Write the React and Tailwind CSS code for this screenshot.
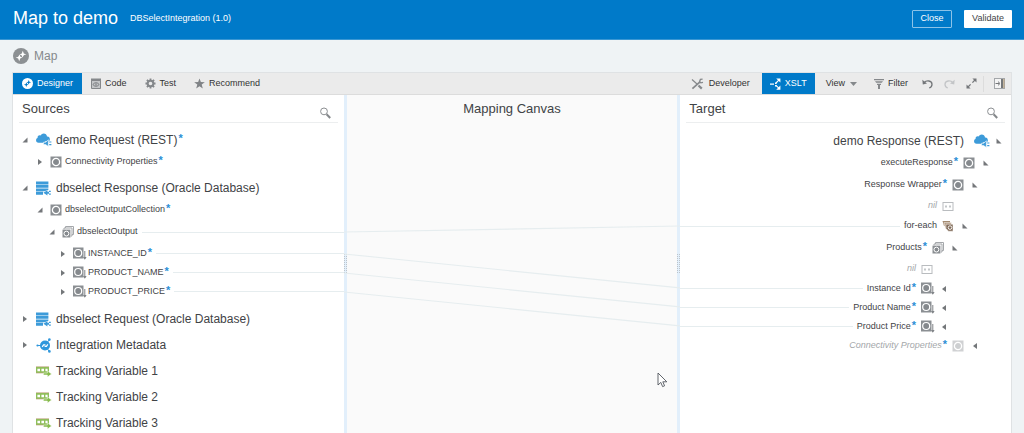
// src/App.jsx
import React, { useState } from 'react';

/* ---------- icons ---------- */

function MapGlyph({ size, disc, mark }) {
  return (
    <svg width={size} height={size} viewBox="0 0 16 16" className="shrink-0">
      <circle cx="8" cy="8" r="8" fill={disc} />
      <path d="M2.6 9.6L5 9L6.6 6.4L7.4 8.8L9.4 9.4L7.2 10.4L6.2 13.2L5.2 10.6Z" fill={mark} />
      <path d="M13.4 6.4L11 7L9.4 9.6L8.6 7.2L6.6 6.6L8.8 5.6L9.8 2.8L10.8 5.4Z" fill={mark} />
    </svg>
  );
}

function CodeIcon() {
  return (
    <svg width="10" height="11" viewBox="0 0 10 11" className="shrink-0">
      <path d="M0.5 2.5V10.5H9.5V2.5Z" fill="#c4c6c8" stroke="#85888b" />
      <path d="M0 0.5H10V2.8H0Z" fill="#85888b" />
      <path d="M3.8 4.5L2.2 6.5L3.8 8.5M6.2 4.5L7.8 6.5L6.2 8.5M5 4V9" fill="none" stroke="#74777a" />
    </svg>
  );
}

function GearIcon() {
  return (
    <svg width="11" height="11" viewBox="0 0 12 12" className="shrink-0">
      <path d="M6 0.5V11.5M0.5 6H11.5M2.1 2.1L9.9 9.9M9.9 2.1L2.1 9.9" stroke="#85888b" strokeWidth="2" />
      <circle cx="6" cy="6" r="3.1" fill="#ebebeb" stroke="#85888b" strokeWidth="2.2" />
    </svg>
  );
}

function StarIcon() {
  return (
    <svg width="11" height="11" viewBox="0 0 12 12" className="shrink-0">
      <path d="M6 0.5L7.5 4.4L11.8 4.6L8.4 7.2L9.6 11.4L6 9L2.4 11.4L3.6 7.2L0.2 4.6L4.5 4.4Z" fill="#808386" />
    </svg>
  );
}

function ToolsIcon() {
  return (
    <svg width="13" height="12" viewBox="0 0 13 12" className="shrink-0" fill="none" stroke="#85888b">
      <path d="M1 1.5L6 6" strokeWidth="1.2" />
      <path d="M7.5 7.5L10.8 10.6" strokeWidth="2.2" />
      <path d="M1.4 10.6L9 3.8" strokeWidth="1.8" />
      <path d="M11.6 1.2L9.4 1.4L8.6 3.4L9.8 4.8L12 4.4" strokeWidth="1.3" />
    </svg>
  );
}

function XsltIcon() {
  return (
    <svg width="11" height="12" viewBox="0 0 11 12" className="shrink-0">
      <path d="M0 5.4H4V6.8H0ZM5 4.4H6.6V6H5ZM5 7H6.6V8.4H5Z" fill="#fff" />
      <path d="M6.2 0.4H10.4V4.6ZM6.2 11.8H10.4V7.6Z" fill="#fff" />
      <path d="M6 5L8.8 2.2M6 7.4L8.8 10.2" stroke="#fff" strokeWidth="1.1" />
    </svg>
  );
}

function FilterIcon() {
  return (
    <svg width="10" height="10" viewBox="0 0 10 10" className="shrink-0" fill="#85888b">
      <path d="M0 0H10V1.3H0ZM1 2.3H9L7.8 3.7H2.2ZM3 4.7H7V6H3ZM4 6H6V10H4Z" />
    </svg>
  );
}

function UndoIcon({ color, flip }) {
  return (
    <svg width="11" height="10" viewBox="0 0 11 10" className="shrink-0">
      <g transform={flip ? 'translate(11 0) scale(-1 1)' : undefined}>
        <path d="M0.3 0.8L0.8 5.4L5 4.6Z" fill={color} />
        <path d="M2 3.6C4.5 1 9.8 1.4 10 5.2C10 7 9 8.4 7.2 9" fill="none" stroke={color} strokeWidth="1.3" />
      </g>
    </svg>
  );
}

function ExpandIcon() {
  return (
    <svg width="11" height="11" viewBox="0 0 11 11" className="shrink-0" fill="#74777a" stroke="#74777a">
      <path d="M6.4 0.5H10.5V4.6ZM0.5 6.4V10.5H4.6Z" stroke="none" />
      <path d="M6.4 4.6L9 2M4.6 6.4L2 9" strokeWidth="1.3" />
    </svg>
  );
}

function PanelIcon() {
  return (
    <svg width="11" height="11" viewBox="0 0 11 11" className="shrink-0">
      <rect x="0.5" y="0.5" width="10" height="10" fill="#f4f4f4" stroke="#a4a7aa" />
      <path d="M7 1H9.4V10H7Z" fill="#74777a" />
      <path d="M1.5 5.5H5M4 3.6L6 5.5L4 7.4" fill="none" stroke="#74777a" />
      <path d="M9.9 1V10" stroke="#c9a36b" strokeWidth="0.7" />
    </svg>
  );
}

function SearchIcon() {
  return (
    <svg width="11" height="12" viewBox="0 0 11 12" fill="none">
      <circle cx="4" cy="4.4" r="3.4" stroke="#8c8f92" strokeWidth="1" />
      <path d="M6.6 7.2L10.2 11" stroke="#85888b" strokeWidth="2" />
    </svg>
  );
}

function CloudIcon() {
  return (
    <svg width="16" height="14" viewBox="0 0 16 14" className="shrink-0" fill="#3d9bd9">
      <path d="M2.6 9.8C-0.6 9.8 -0.6 5.6 1.6 5C1.2 2.8 3.4 1.8 4.6 2.6C6 -0.6 10.8 0 11 3.6C14 3.2 14.8 7.4 12.6 8.6L10 8L7.4 9.8Z" />
      <path d="M12.4 6.8V13.4L9.6 11.6H7.6V9.2H9.6Z" stroke="#fff" strokeWidth="0.6" />
      <path d="M13.2 8.4H15.4V9.6H13.2ZM13.2 11H15.4V12.2H13.2Z" />
    </svg>
  );
}

function DatabaseIcon() {
  return (
    <svg width="16" height="15" viewBox="0 0 16 15" className="shrink-0" fill="#3d9bd9">
      <path d="M0 0.4H12.4V3.4H0ZM0 4H12.4V6.8H0ZM0 7.4H12.4V8.8L8.6 10.2H0ZM0 10.8H7V13.8H0Z" />
      <path d="M7.4 11.8L11.4 9.2V14.6ZM11.4 10.8H13V12.8H11.4ZM13 9.8H14.8V11H13ZM13 12.6H14.8V13.8H13Z" />
    </svg>
  );
}

function MetadataIcon() {
  return (
    <svg width="16" height="15" viewBox="0 0 16 15" className="shrink-0" fill="#2f97dc">
      <path d="M9 7.5L13.4 1.6M9 7.5L13.4 13.6M9 7.5H1" stroke="#2f97dc" strokeWidth="1" />
      <circle cx="9" cy="7.5" r="5" />
      <circle cx="13.4" cy="1.6" r="1.3" />
      <circle cx="13.4" cy="13.4" r="1.3" />
      <circle cx="1.5" cy="7.5" r="1.1" />
      <path d="M6.2 8.8L7.6 6.8H9.4M11.8 6.4L10.4 8.4H8.6" fill="none" stroke="#fff" strokeWidth="1.2" />
    </svg>
  );
}

function TrackingIcon() {
  return (
    <svg width="16" height="12" viewBox="0 0 16 12" className="shrink-0">
      <path d="M0 2H13V8H0Z" fill="#8fbf5a" />
      <path d="M0 1.6H13M0 8H8" stroke="#b79b72" strokeWidth="0.6" />
      <path d="M1.4 3.8H4V6.2H1.4ZM5.4 3.8H8V6.2H5.4ZM9.4 3.8H11.6V6.2H9.4Z" fill="#fff" />
      <path d="M7.4 8H11.4V5.8L15.6 9L11.4 12V10H7.4Z" fill="#86bb4b" stroke="#fff" strokeWidth="0.5" />
    </svg>
  );
}

function ElementIcon({ faded }) {
  return (
    <svg width="12" height="12" viewBox="0 0 12 12" className={faded ? 'shrink-0 opacity-40' : 'shrink-0'}>
      <path d="M0.5 0.5H11.5V11.5H0.5Z" fill="#8b8f93" />
      <circle cx="6" cy="6" r="3.6" fill="#85898d" stroke="#fff" strokeWidth="1.3" />
    </svg>
  );
}

function LeafIcon() {
  return (
    <svg width="15" height="13" viewBox="0 0 15 13" className="shrink-0">
      <path d="M1 0.5H11.5V11.5H1Z" fill="#8b8f93" />
      <circle cx="6.2" cy="6" r="3.5" fill="#85898d" stroke="#fff" strokeWidth="1.2" />
      <path d="M12.8 4V12" stroke="#808488" strokeWidth="1" />
      <path d="M11 10H14.6L12.8 12.8Z" fill="#808488" />
    </svg>
  );
}

function RepeatIcon() {
  return (
    <svg width="12" height="12" viewBox="0 0 12 12" className="shrink-0">
      <path d="M3.5 2V0.5H11.5V8.5H9.8" fill="none" stroke="#a4a7aa" />
      <path d="M2 3.4V2H10V10H8.8" fill="none" stroke="#a4a7aa" />
      <path d="M0.5 3.6H8.4V11.5H0.5Z" fill="#8b8f93" />
      <circle cx="4.4" cy="7.6" r="2.4" fill="#85898d" stroke="#fff" strokeWidth="1" />
    </svg>
  );
}

function ForEachIcon() {
  return (
    <svg width="12" height="12" viewBox="0 0 12 12" className="shrink-0">
      <path d="M0.5 1H8V6H2Z" fill="#a38a70" />
      <path d="M2 2.6H9.4V8.4H3.4Z" fill="#b39a80" stroke="#fff" strokeWidth="0.5" />
      <path d="M4 4.2H11V11.2H6.4L4 8.4Z" fill="#806a57" stroke="#fff" strokeWidth="0.5" />
      <circle cx="8" cy="7.6" r="1.8" fill="none" stroke="#fff" strokeWidth="0.9" />
    </svg>
  );
}

function NilIcon() {
  return (
    <svg width="12" height="11" viewBox="0 0 12 11" className="shrink-0" fill="none" stroke="#b9bcbf">
      <rect x="1" y="1.5" width="10" height="8" />
      <path d="M3 4.6H5V6.4H3ZM7 4.6H9V6.4H7Z" fill="#c4c7ca" stroke="none" />
    </svg>
  );
}

function Pointer() {
  return (
    <svg width="11" height="16" viewBox="0 0 11 16">
      <path d="M1 1V13L3.8 10.4L5.6 14.6L7.6 13.8L5.8 9.8H9.8Z" fill="#fff" stroke="#50555c" strokeWidth="0.9" />
    </svg>
  );
}

// direction of the little disclosure triangle
const arrowPaths = {
  open: 'M5.5 0.5V5.5H0.5Z',
  closed: 'M1 0L5 3L1 6Z',
  openRight: 'M0.5 0.5V5.5H5.5Z',
  closedRight: 'M5 0L1 3L5 6Z',
};

function Arrow({ type }) {
  return (
    <span className="flex w-3 shrink-0 justify-center">
      {type && (
        <svg width="6" height="6" viewBox="0 0 6 6">
          <path d={arrowPaths[type]} fill="#74777a" />
        </svg>
      )}
    </span>
  );
}

const icons = {
  cloud: <CloudIcon />,
  database: <DatabaseIcon />,
  metadata: <MetadataIcon />,
  tracking: <TrackingIcon />,
  element: <ElementIcon />,
  faded: <ElementIcon faded />,
  leaf: <LeafIcon />,
  repeat: <RepeatIcon />,
  foreach: <ForEachIcon />,
  nil: <NilIcon />,
};

/* ---------- tree rows ---------- */

const Required = () => <span className="mb-1 ml-px text-[11px] leading-3 font-bold text-[#2c8fd6]">*</span>;

const sourceIndent = ['pl-[6px]', 'pl-[21px]', 'pl-[33px]', 'pl-[44px]'];
const targetIndent = ['pr-[6px]', 'pr-[19px]', 'pr-[30px]', 'pr-[40px]', 'pr-[50px]', 'pr-[61px]'];

function SourceRow({ label, icon, arrow, level = 0, required, mapped, leaf }) {
  const top = level === 0;
  return (
    <li className={`flex items-center ${leaf ? 'h-[19px]' : 'h-[22px]'} ${sourceIndent[level]}`}>
      <Arrow type={arrow} />
      <span className={`flex shrink-0 justify-center ${top ? 'mr-[2px] ml-[3px] w-5' : 'ml-[2px] mr-px w-4'}`}>{icons[icon]}</span>
      <span className={`whitespace-nowrap ${top ? 'text-[12px]' : 'text-[9px]'}`}>{label}</span>
      {required && <Required />}
      {mapped && <span className="ml-1 flex-1 border-t border-[#e6edef]" />}
    </li>
  );
}

function TargetRow({ label, icon, arrow, level = 0, required, mapped, muted, height = 'h-[22px]' }) {
  const top = level === 0;
  return (
    <li className={`flex items-center justify-end ${height} ${targetIndent[level]}`}>
      {mapped && <span className="mr-1 flex-1 border-t border-[#e6edef]" />}
      <span className={`whitespace-nowrap ${top ? 'text-[12px]' : 'text-[9px]'} ${muted ? 'text-[#a4a7aa] italic' : ''}`}>
        {label}
      </span>
      {required && <Required />}
      <span className={`flex shrink-0 justify-center ${top ? 'ml-2 mr-px w-5' : 'mr-[3px] ml-[3px] w-4'}`}>{icons[icon]}</span>
      <Arrow type={arrow} />
    </li>
  );
}

function PanelHeader({ title }) {
  return (
    <div className="mx-[6px] flex h-7 items-center justify-between border-b border-[#eceeef] pt-px pr-[7px] pl-[3px]">
      <h2 className="text-[13px]">{title}</h2>
      <button type="button" aria-label={`Search ${title}`} className="mt-2">
        <SearchIcon />
      </button>
    </div>
  );
}

function Splitter() {
  return (
    <div className="flex w-[3px] shrink-0 items-center bg-[#e2effb]">
      <svg width="3" height="20" viewBox="0 0 3 20">
        <path d="M0.5 0V20M2.5 0V20" stroke="#bcc4cb" strokeDasharray="1 1" />
      </svg>
    </div>
  );
}

const tabs = [
  { name: 'Code', icon: <CodeIcon /> },
  { name: 'Test', icon: <GearIcon /> },
  { name: 'Recommend', icon: <StarIcon /> },
];

// y of each mapping at the left and right edge of the canvas
const mappings = [
  [137, 131],
  [159, 193],
  [178, 212],
  [197, 231],
];

export default function App() {
  const [activeTab, setActiveTab] = useState('Designer');

  const tabClass = (name) =>
    `flex h-full items-center gap-1 px-[9px] ${activeTab === name ? 'bg-[#007ac9] text-white' : 'hover:bg-gray-200'}`;

  return (
    <div className="flex h-screen flex-col overflow-hidden bg-[#eff3f5] font-['Liberation_Sans',Arial,sans-serif] text-[#3f4346]">
      <header className="flex h-10 shrink-0 items-center border-b border-[#3a97d3] bg-[#007ac9] pr-3 pb-[2px] pl-[13px] text-white">
        <h1 className="text-[18px]">Map to demo</h1>
        <span className="ml-3 text-[9px]">DBSelectIntegration (1.0)</span>
        <div className="ml-auto flex gap-3 text-[9px]">
          <button type="button" className="h-[18px] w-10 rounded-[1px] border border-[#8cc3e8]">Close</button>
          <button type="button" className="h-[18px] w-12 rounded-[1px] bg-white text-[#3f4346]">Validate</button>
        </div>
      </header>

      <div className="flex h-8 shrink-0 items-center gap-[5px] pl-[13px] text-[12px] text-[#85898c]">
        <MapGlyph size={16} disc="#8c9093" mark="#fff" />
        Map
      </div>

      <main className="mr-3 ml-3 flex min-h-0 flex-1 flex-col border-x border-t border-[#dfe2e4]">
        <nav className="flex h-[22px] shrink-0 items-center border-b border-[#dcdcdc] bg-[#ebebeb] text-[9px] text-[#333]">
          <div className="flex h-full">
            <button type="button" className={tabClass('Designer')} onClick={() => setActiveTab('Designer')}>
              <MapGlyph size={11} disc={activeTab === 'Designer' ? '#fff' : '#85888b'} mark={activeTab === 'Designer' ? '#007ac9' : '#fff'} />
              Designer
            </button>
            {tabs.map((tab) => (
              <button key={tab.name} type="button" className={tabClass(tab.name)} onClick={() => setActiveTab(tab.name)}>
                {tab.icon}
                {tab.name}
              </button>
            ))}
          </div>

          <div className="ml-auto flex h-full items-center pr-[6px]">
            <button type="button" className="flex items-center gap-[5px] pr-3">
              <ToolsIcon />
              Developer
            </button>
            <button type="button" className="flex h-full items-center gap-1 bg-[#007ac9] px-2 text-white">
              <XsltIcon />
              XSLT
            </button>
            <button type="button" className="flex items-center gap-[5px] pl-[11px]">
              View
              <svg width="7" height="4" viewBox="0 0 7 4"><path d="M0 0H7L3.5 4Z" fill="#85888b" /></svg>
            </button>
            <button type="button" className="ml-[17px] flex items-center gap-1">
              <FilterIcon />
              Filter
            </button>
            <div className="ml-[14px] flex gap-[11px]">
              <button type="button" aria-label="Undo"><UndoIcon color="#74777a" /></button>
              <button type="button" aria-label="Redo" disabled><UndoIcon color="#c3c5c7" flip /></button>
              <button type="button" aria-label="Maximize"><ExpandIcon /></button>
            </div>
            <span className="mr-[10px] ml-[6px] h-4 border-l border-[#dcdcdc]" />
            <button type="button" aria-label="Components"><PanelIcon /></button>
          </div>
        </nav>

        <div className="flex min-h-0 flex-1 bg-white">
          <section className="min-w-0 flex-1 overflow-hidden">
            <PanelHeader title="Sources" />
            <ul className="pt-[6px]">
              <SourceRow label="demo Request (REST)" icon="cloud" arrow="open" required />
              <SourceRow label="Connectivity Properties" icon="element" arrow="closed" level={1} required />
            </ul>
            <ul className="pt-1">
              <SourceRow label="dbselect Response (Oracle Database)" icon="database" arrow="open" />
              <SourceRow label="dbselectOutputCollection" icon="element" arrow="open" level={1} required />
              <SourceRow label="dbselectOutput" icon="repeat" arrow="open" level={2} mapped />
            </ul>
            <ul className="pt-px pb-[3px]">
              <SourceRow label="INSTANCE_ID" icon="leaf" arrow="closed" level={3} required mapped leaf />
              <SourceRow label="PRODUCT_NAME" icon="leaf" arrow="closed" level={3} required mapped leaf />
              <SourceRow label="PRODUCT_PRICE" icon="leaf" arrow="closed" level={3} required mapped leaf />
            </ul>
            <ul className="flex flex-col gap-1 pt-1">
              <SourceRow label="dbselect Request (Oracle Database)" icon="database" arrow="closed" />
              <SourceRow label="Integration Metadata" icon="metadata" arrow="closed" />
              <SourceRow label="Tracking Variable 1" icon="tracking" />
              <SourceRow label="Tracking Variable 2" icon="tracking" />
              <SourceRow label="Tracking Variable 3" icon="tracking" />
            </ul>
          </section>

          <Splitter />

          <section className="relative min-w-0 flex-1 bg-[#fafafa] text-center">
            <h2 className="pt-1 text-[13px]">Mapping Canvas</h2>
            <div className="absolute inset-y-0 -right-[3px] -left-[3px]">
              <svg width="100%" height="100%" stroke="#e6edef" strokeWidth="1.2">
                {mappings.map(([from, to]) => (
                  <line key={from} x1="0" y1={from} x2="100%" y2={to} />
                ))}
              </svg>
            </div>
            <div className="absolute top-[277px] right-[9px]">
              <Pointer />
            </div>
          </section>

          <Splitter />

          <section className="min-w-0 flex-1 overflow-hidden">
            <PanelHeader title="Target" />
            <ul className="pt-[7px]">
              <TargetRow label="demo Response (REST)" icon="cloud" arrow="openRight" />
              <TargetRow label="executeResponse" icon="element" arrow="openRight" level={1} required />
              <TargetRow label="Response Wrapper" icon="element" arrow="openRight" level={2} required />
              <TargetRow label="nil" icon="nil" level={3} muted height="h-5" />
              <TargetRow label="for-each" icon="foreach" arrow="openRight" level={3} mapped height="h-5" />
              <TargetRow label="Products" icon="repeat" arrow="openRight" level={4} required height="h-[23px]" />
              <TargetRow label="nil" icon="nil" level={5} muted height="h-5" />
              <TargetRow label="Instance Id" icon="leaf" arrow="closedRight" level={5} required mapped height="h-[19px]" />
              <TargetRow label="Product Name" icon="leaf" arrow="closedRight" level={5} required mapped height="h-[19px]" />
              <TargetRow label="Product Price" icon="leaf" arrow="closedRight" level={5} required mapped height="h-[19px]" />
              <TargetRow label="Connectivity Properties" icon="faded" arrow="closedRight" level={2} required muted height="h-[19px]" />
            </ul>
          </section>
        </div>
      </main>
    </div>
  );
}
